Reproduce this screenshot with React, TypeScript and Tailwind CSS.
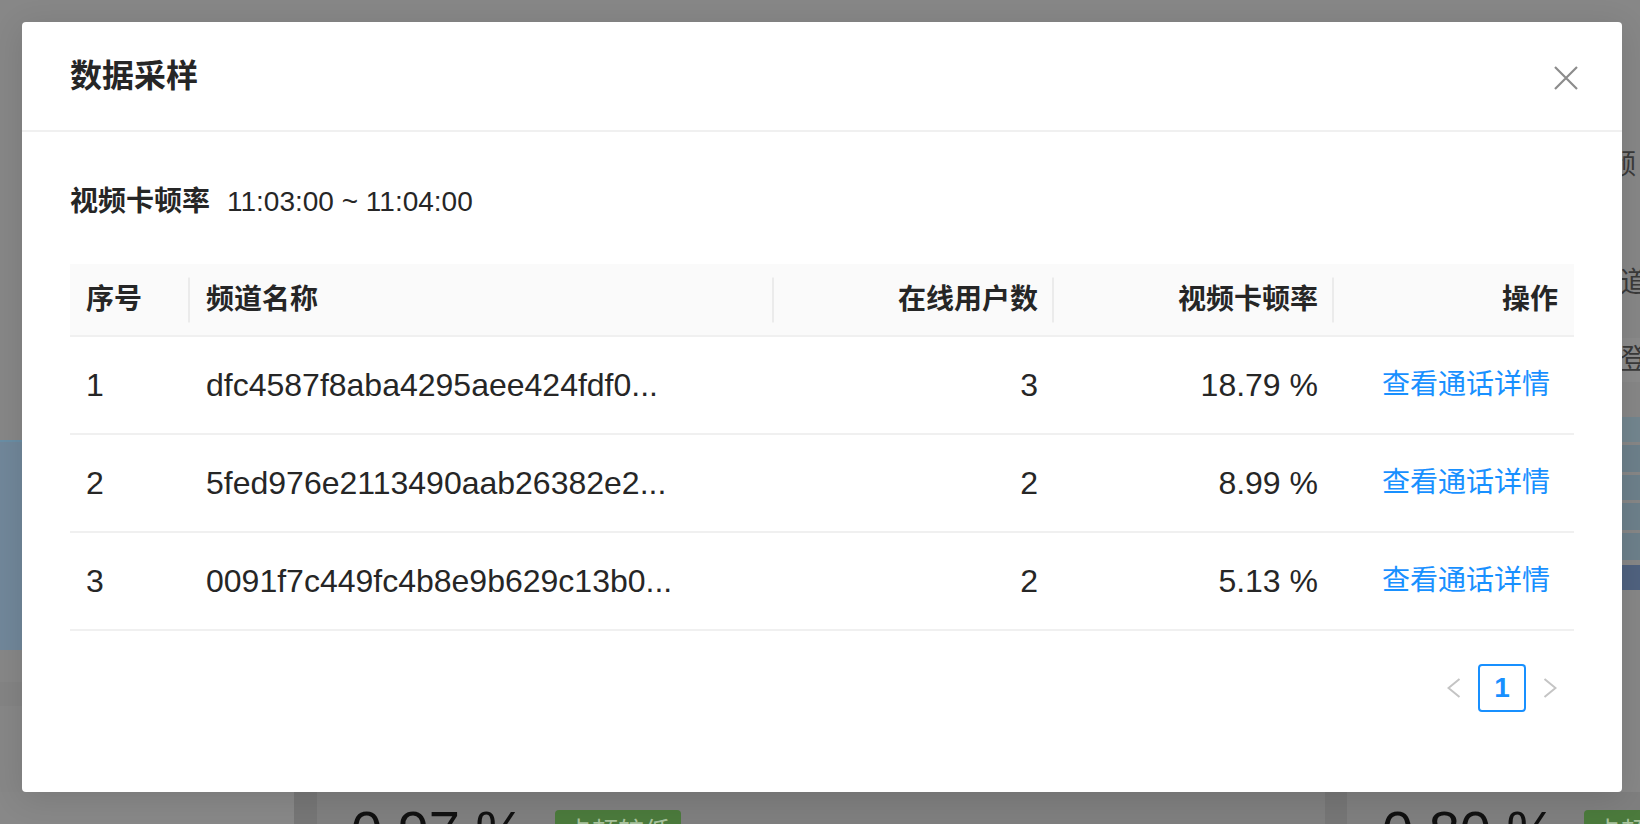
import React from 'react';

// 数据采样 modal over a dimmed dashboard

const rows = [
  { id: 1, name: 'dfc4587f8aba4295aee424fdf0...', users: 3, rate: '18.79 %' },
  { id: 2, name: '5fed976e2113490aab26382e2...', users: 2, rate: '8.99 %' },
  { id: 3, name: '0091f7c449fc4b8e9b629c13b0...', users: 2, rate: '5.13 %' },
];

const cols = 'grid grid-cols-[120px_584px_280px_280px_240px]';

const Sep = () => (
  <span className="absolute right-0 top-1/2 h-[45px] w-[2px] -translate-y-1/2 bg-[#ebebeb]" />
);

const Backdrop: React.FC = () => (
  <div className="flex h-full flex-col">
    <div className="flex h-[792px] shrink-0">
      {/* left: chart card, mostly hidden */}
      <div className="flex flex-1 flex-col">
        <div className="h-[440px]" />
        <div className="h-[210px] border-t-2 border-[#6a8ea5] bg-[#71879a]" />
        <div className="h-[32px]" />
        <div className="h-[24px] bg-[#848484]" />
      </div>
      {/* right: table card, mostly hidden */}
      <div className="flex w-[60px] flex-col overflow-hidden text-[28px] leading-[30px] text-[#3a3a3a]">
        <div className="h-[150px] shrink-0" />
        <div className="whitespace-nowrap">视频</div>
        <div className="h-[88px] shrink-0" />
        <div className="ml-[12px] whitespace-nowrap">频道</div>
        <div className="h-[40px] shrink-0" />
        <div className="flex h-[44px] shrink-0 items-center bg-[#8b8b8b] pl-[40px]">登</div>
        <div className="h-[35px] shrink-0" />
        <div className="flex flex-col gap-[3px]">
          <div className="h-[25px] bg-[#73868f]" />
          <div className="h-[27px] bg-[#6d808b]" />
          <div className="h-[25px] bg-[#6d808b]" />
          <div className="h-[27px] bg-[#6d808b]" />
          <div className="h-[27px] bg-[#6d808b]" />
          <div className="mt-[2px] h-[25px] bg-[#50627f]" />
        </div>
      </div>
    </div>
    {/* bottom stat cards */}
    <div className="flex min-h-0 flex-1 overflow-hidden">
      <div className="w-[294px] shrink-0 bg-[#888888]" />
      <div className="w-[23px] shrink-0 bg-[#767676]" />
      <div className="flex w-[1008px] shrink-0 items-start whitespace-nowrap bg-[#7f7f7f] pl-[34px] pt-[11px]">
        <span className="text-[56px] leading-[56px] text-[#111111]">0.97 %</span>
        <span className="ml-[30px] mt-[7px] flex h-[44px] w-[126px] shrink-0 items-center justify-center rounded-[4px] bg-[#4b7a3c] text-[26px] text-[#a9c39e]">
          卡顿较低
        </span>
      </div>
      <div className="w-[22px] shrink-0 bg-[#767676]" />
      <div className="flex flex-1 items-start overflow-hidden whitespace-nowrap bg-[#7f7f7f] pl-[35px] pt-[11px]">
        <span className="shrink-0 text-[56px] leading-[56px] text-[#111111]">0.80 %</span>
        <span className="ml-[28px] mt-[7px] flex h-[44px] w-[126px] shrink-0 items-center justify-center rounded-[4px] bg-[#4b7a3c] text-[26px] text-[#a9c39e]">
          卡顿较低
        </span>
      </div>
    </div>
  </div>
);

const Chevron: React.FC<{ dir: 'left' | 'right' }> = ({ dir }) => (
  <svg width="14" height="20" viewBox="0 0 14 20" fill="none">
    <polyline
      points={dir === 'left' ? '12.5,1 1.5,10 12.5,19' : '1.5,1 12.5,10 1.5,19'}
      stroke="#c4c4c4"
      strokeWidth="2"
    />
  </svg>
);

const Modal: React.FC = () => (
  <div className="absolute left-[22px] top-[22px] w-[1600px] rounded-[4px] bg-white shadow-[0_6px_32px_rgba(0,0,0,0.12)]">
    {/* HEADER */}
    <div className="relative border-b-2 border-[#f0f0f0] px-[48px] py-[32px]">
      <div className="text-[32px] font-semibold leading-[44px] text-[#262626]">数据采样</div>
      <button className="absolute right-0 top-0 flex h-[112px] w-[112px] items-center justify-center">
        <svg width="24" height="24" viewBox="0 0 24 24" fill="none">
          <path d="M1 1L23 23M23 1L1 23" stroke="#8c8c8c" strokeWidth="2.2" />
        </svg>
      </button>
    </div>

    {/* BODY */}
    <div className="px-[48px] pb-[48px] pt-[48px]">
      <div className="flex items-center text-[28px] leading-[44px] text-[#262626]">
        <span className="font-semibold">视频卡顿率</span>
        <span className="ml-[17px]">11:03:00 ~ 11:04:00</span>
      </div>

      <div className="mt-[40px] text-[#262626]">
        <div className={`${cols} h-[73px] border-b-2 border-[#f0f0f0] bg-[#fafafa] text-[28px] font-semibold`}>
          <div className="relative flex items-center px-[16px]">序号<Sep /></div>
          <div className="relative flex items-center px-[16px]">频道名称<Sep /></div>
          <div className="relative flex items-center justify-end px-[16px]">在线用户数<Sep /></div>
          <div className="relative flex items-center justify-end px-[16px]">视频卡顿率<Sep /></div>
          <div className="flex items-center justify-end px-[16px]">操作</div>
        </div>
        {rows.map((r) => (
          <div key={r.id} className={`${cols} h-[98px] border-b-2 border-[#f0f0f0] text-[32px]`}>
            <div className="flex items-center px-[16px]">{r.id}</div>
            <div className="flex items-center whitespace-nowrap px-[16px]">{r.name}</div>
            <div className="flex items-center justify-end px-[16px]">{r.users}</div>
            <div className="flex items-center justify-end px-[16px]">{r.rate}</div>
            <div className="flex items-center justify-end pr-[24px] text-[28px] text-[#1890ff]">查看通话详情</div>
          </div>
        ))}
      </div>

      {/* PAGINATION */}
      <div className="mb-[32px] mt-[33px] flex justify-end">
        <div className="flex h-[48px] w-[48px] items-center justify-center">
          <Chevron dir="left" />
        </div>
        <div className="flex h-[48px] w-[48px] items-center justify-center rounded-[4px] border-2 border-[#1890ff] text-[28px] font-semibold text-[#1890ff]">
          1
        </div>
        <div className="flex h-[48px] w-[48px] items-center justify-center">
          <Chevron dir="right" />
        </div>
      </div>
    </div>
  </div>
);

export default function App() {
  return (
    <div className="relative h-[824px] w-[1640px] overflow-hidden bg-[#878787] font-['Liberation_Sans','Noto_Sans_CJK_SC',sans-serif]">
      <Backdrop />
      <Modal />
    </div>
  );
}
